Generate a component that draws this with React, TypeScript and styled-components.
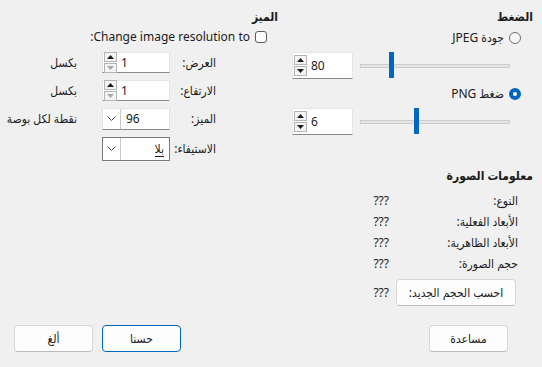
import styled, { createGlobalStyle } from "styled-components";

const GlobalStyle = createGlobalStyle`
  html, body {
    margin: 0;
    padding: 0;
    background: #f0f0f0;
  }
  body {
    font-family: "Noto Sans", "DejaVu Sans Condensed", "DejaVu Sans", sans-serif;
    font-size: 12px;
    color: #1b1b1b;
  }
`;

const Dialog = styled.div`
  direction: rtl;
  width: 542px;
  height: 367px;
  box-sizing: border-box;
  background: #f0f0f0;
  display: flex;
  flex-direction: column;
`;

const Top = styled.div`
  display: flex;
  gap: 12px;
  padding: 9px 9px 0 8px;
`;

const Column = styled.div<{ $width: number }>`
  width: ${(p) => p.$width}px;
  display: flex;
  flex-direction: column;
`;

const SectionTitle = styled.div<{ $top?: number }>`
  font-weight: 700;
  line-height: 16px;
  height: 16px;
  margin-top: ${(p) => p.$top ?? 0}px;
  white-space: nowrap;
`;

const OptionRow = styled.label<{ $top: number; $indent: number }>`
  display: flex;
  align-items: center;
  gap: 5px;
  height: 16px;
  line-height: 16px;
  margin-top: ${(p) => p.$top}px;
  padding-right: ${(p) => p.$indent}px;
  white-space: nowrap;
`;

const RadioMark = styled.span<{ $checked?: boolean }>`
  width: 12px;
  height: 12px;
  border-radius: 50%;
  box-sizing: border-box;
  flex: none;
  background: ${(p) => (p.$checked ? "#fff" : "#f7f7f7")};
  border: ${(p) => (p.$checked ? "4px solid #0067c0" : "1px solid #6e6e6e")};
`;

const CheckMark = styled.span`
  width: 12px;
  height: 12px;
  border-radius: 3px;
  box-sizing: border-box;
  flex: none;
  background: #fbfbfb;
  border: 1px solid #5c5c5c;
`;

const SliderRow = styled.div<{ $top: number }>`
  display: flex;
  align-items: center;
  gap: 7px;
  height: 27px;
  margin-top: ${(p) => p.$top}px;
  padding-right: 23px;
`;

const Track = styled.div`
  position: relative;
  width: 150px;
  height: 27px;
  flex: none;

  &::before {
    content: "";
    position: absolute;
    left: 0;
    right: 0;
    top: 12px;
    height: 4px;
    box-sizing: border-box;
    background: #e4e4e4;
    border: 1px solid #cdcdcd;
  }
`;

const Thumb = styled.span`
  position: absolute;
  top: 0;
  width: 5px;
  height: 26px;
  background: #0067c0;
`;

const SpinBox = styled.div<{ $width: number; $height: number }>`
  direction: ltr;
  display: flex;
  align-items: center;
  width: ${(p) => p.$width}px;
  height: ${(p) => p.$height}px;
  box-sizing: border-box;
  background: #fff;
  border: 1px solid #e6e6e6;
  border-bottom-color: #8a8a8a;
  padding-left: 1px;
  flex: none;
`;

const SpinArrows = styled.div`
  display: flex;
  flex-direction: column;
  gap: 1px;
  margin-right: 4px;
`;

const ArrowBtn = styled.span<{ $disabled?: boolean }>`
  width: 13px;
  height: 10px;
  box-sizing: border-box;
  border: 1px solid #b4b4b4;
  background: #f4f4f4;
  display: flex;
  align-items: center;
  justify-content: center;
  color: ${(p) => (p.$disabled ? "#a9a9a9" : "#1b1b1b")};
`;

const SpinValue = styled.span`
  line-height: 16px;
`;

const ComboBox = styled.div<{ $focused?: boolean }>`
  direction: ltr;
  display: flex;
  align-items: stretch;
  width: 68px;
  height: ${(p) => (p.$focused ? 24 : 22)}px;
  box-sizing: border-box;
  background: #fff;
  border: 1px solid ${(p) => (p.$focused ? "#7a7a7a" : "#e3e3e3")};
  border-bottom-color: ${(p) => (p.$focused ? "#7a7a7a" : "#8a8a8a")};
`;

const ComboArrow = styled.span`
  width: 17px;
  flex: none;
  border-right: 1px solid #c9c9c9;
  display: flex;
  align-items: center;
  justify-content: center;
`;

const ComboText = styled.span<{ $alignEnd?: boolean }>`
  flex: 1;
  display: flex;
  align-items: center;
  justify-content: ${(p) => (p.$alignEnd ? "flex-end" : "flex-start")};
  padding: 0 5px 0 5px;
  line-height: 16px;
`;

const Underlined = styled.span`
  border-bottom: 1px solid #1b1b1b;
  line-height: 14px;
`;

const FormGrid = styled.div`
  display: grid;
  grid-template-columns: 40px 68px auto;
  column-gap: 6px;
  row-gap: 7px;
  align-items: center;
  margin-top: 7px;
  padding-right: 62px;
`;

const FieldLabel = styled.span`
  white-space: nowrap;
  line-height: 16px;
`;

const Unit = styled.span`
  white-space: nowrap;
  margin-right: 19px;
  line-height: 16px;
`;

const InfoGrid = styled.div`
  display: grid;
  grid-template-columns: 122px auto;
  column-gap: 7px;
  margin-top: 6px;
  padding-right: 15px;
  grid-auto-rows: 21px;
  align-items: center;
`;

const InfoValue = styled.span`
  direction: ltr;
  text-align: right;
  width: 22px;
  line-height: 16px;
`;

const CalcRow = styled.div`
  display: flex;
  align-items: center;
  gap: 7px;
  margin-top: 5px;
  padding-right: 17px;
`;

const Button = styled.button<{ $width: number; $primary?: boolean }>`
  width: ${(p) => p.$width}px;
  height: 27px;
  box-sizing: border-box;
  font: inherit;
  color: #1b1b1b;
  background: #fdfdfd;
  border: 1px solid ${(p) => (p.$primary ? "#0067c0" : "#d6d6d6")};
  border-bottom-color: ${(p) => (p.$primary ? "#0067c0" : "#bcbcbc")};
  border-radius: 4px;
  padding: 0;
  direction: rtl;
`;

const Footer = styled.div`
  margin-top: auto;
  display: flex;
  justify-content: space-between;
  padding: 0 34px 15px 14px;
`;

const ButtonGroup = styled.div`
  display: flex;
  gap: 9px;
`;

const UpIcon = () => (
  <svg width="7" height="4" viewBox="0 0 7 4">
    <polygon points="0,4 7,4 3.5,0" fill="currentColor" />
  </svg>
);

const DownIcon = () => (
  <svg width="7" height="4" viewBox="0 0 7 4">
    <polygon points="0,0 7,0 3.5,4" fill="currentColor" />
  </svg>
);

const Chevron = () => (
  <svg width="9" height="6" viewBox="0 0 9 6">
    <polyline points="0.5,0.5 4.5,4.5 8.5,0.5" fill="none" stroke="#444" strokeWidth="1" />
  </svg>
);

const Spin = ({ value, width, height, downDisabled }: { value: string; width: number; height: number; downDisabled?: boolean }) => (
  <SpinBox $width={width} $height={height}>
    <SpinArrows>
      <ArrowBtn><UpIcon /></ArrowBtn>
      <ArrowBtn $disabled={downDisabled}><DownIcon /></ArrowBtn>
    </SpinArrows>
    <SpinValue>{value}</SpinValue>
  </SpinBox>
);

const Slider = ({ value, min, max }: { value: number; min: number; max: number }) => {
  const frac = (value - min) / (max - min);
  return (
    <Track>
      <Thumb style={{ right: Math.round(frac * 145) }} />
    </Track>
  );
};

const infoRows = [
  ["النوع:", "???"],
  ["الأبعاد الفعلية:", "???"],
  ["الأبعاد الظاهرية:", "???"],
  ["حجم الصورة:", "???"],
];

export default function App() {
  return (
    <>
      <GlobalStyle />
      <Dialog>
        <Top>
          <Column $width={243}>
            <SectionTitle>الضغط</SectionTitle>
            <OptionRow $top={5} $indent={12}>
              <RadioMark />
              <span>جودة JPEG</span>
            </OptionRow>
            <SliderRow $top={6}>
              <Slider value={80} min={1} max={100} />
              <Spin value="80" width={61} height={27} />
            </SliderRow>
            <OptionRow $top={7} $indent={12}>
              <RadioMark $checked />
              <span>ضغط PNG</span>
            </OptionRow>
            <SliderRow $top={6}>
              <Slider value={6} min={1} max={9} />
              <Spin value="6" width={61} height={27} />
            </SliderRow>

            <SectionTitle $top={33}>معلومات الصورة</SectionTitle>
            <InfoGrid>
              {infoRows.map(([label, value]) => [
                <FieldLabel key={label}>{label}</FieldLabel>,
                <InfoValue key={label + "-v"}>{value}</InfoValue>,
              ])}
            </InfoGrid>
            <CalcRow>
              <Button $width={120}>احسب الحجم الجديد:</Button>
              <InfoValue>???</InfoValue>
            </CalcRow>
          </Column>

          <Column $width={270}>
            <SectionTitle>الميز</SectionTitle>
            <OptionRow $top={4} $indent={11}>
              <CheckMark />
              <span>Change image resolution to:</span>
            </OptionRow>
            <FormGrid>
              <FieldLabel>العرض:</FieldLabel>
              <Spin value="1" width={68} height={21} downDisabled />
              <Unit>بكسل</Unit>

              <FieldLabel>الارتفاع:</FieldLabel>
              <Spin value="1" width={68} height={21} downDisabled />
              <Unit>بكسل</Unit>

              <FieldLabel>الميز:</FieldLabel>
              <ComboBox>
                <ComboArrow><Chevron /></ComboArrow>
                <ComboText>96</ComboText>
              </ComboBox>
              <Unit>نقطة لكل بوصة</Unit>

              <FieldLabel>الاستيفاء:</FieldLabel>
              <ComboBox $focused>
                <ComboArrow><Chevron /></ComboArrow>
                <ComboText $alignEnd><Underlined>بلا</Underlined></ComboText>
              </ComboBox>
              <span />
            </FormGrid>
          </Column>
        </Top>

        <Footer>
          <Button $width={79}>مساعدة</Button>
          <ButtonGroup>
            <Button $width={79} $primary>حسنا</Button>
            <Button $width={79}>ألغ</Button>
          </ButtonGroup>
        </Footer>
      </Dialog>
    </>
  );
}
